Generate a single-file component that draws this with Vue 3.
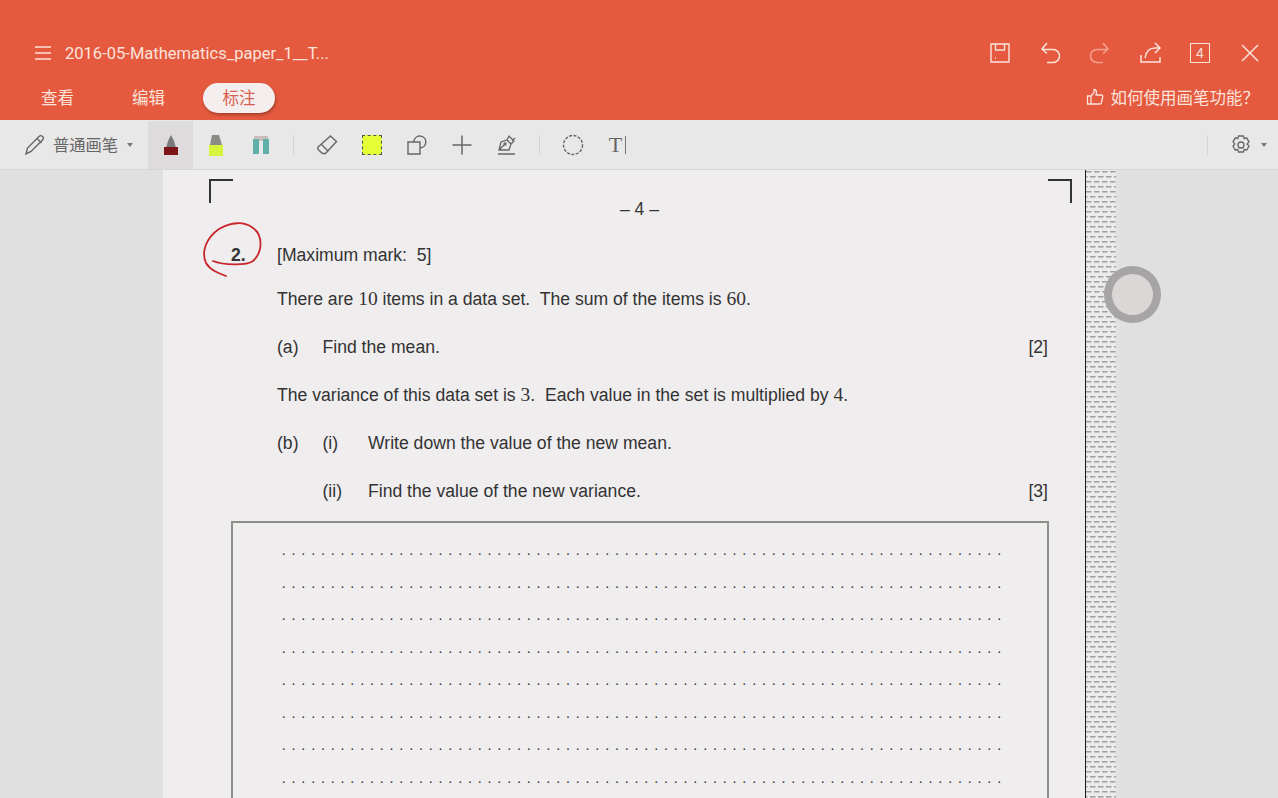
<script setup>
const dotRows = Array.from({ length: 8 }, (_, i) => i)
const dots = '.'.repeat(74)
</script>

<template>
  <div class="app">
    <header class="header">
      <div class="title-row">
        <svg class="menu-icon" width="18" height="16" viewBox="0 0 18 16" fill="none" stroke="#fbe3dc" stroke-width="1.5">
          <path d="M1 2h16M1 8h16M1 14h16" />
        </svg>
        <span class="doc-title">2016-05-Mathematics_paper_1__T...</span>
        <div class="actions">
          <button class="action">
            <svg width="22" height="22" viewBox="0 0 22 22" fill="none" stroke="#fbe3dc" stroke-width="1.4">
              <path d="M2 2h18v18H2zM6.500 2v6h9V2M6 16h1" />
            </svg>
          </button>
          <button class="action">
            <svg width="24" height="24" viewBox="0 0 24 24" fill="none" stroke="#fbe3dc" stroke-width="1.5">
              <path d="M9 2L4 8l5 4.500M4 8.500H15a6.500 6.500 0 0 1 0 13H9" />
            </svg>
          </button>
          <button class="action">
            <svg width="24" height="24" viewBox="0 0 24 24" fill="none" stroke="#f4a18f" stroke-width="1.5">
              <path d="M15 2l5 6-5 4.500M20 8.500H9a6.500 6.500 0 0 0 0 13h6" />
            </svg>
          </button>
          <button class="action">
            <svg width="24" height="24" viewBox="0 0 24 24" fill="none" stroke="#fbe3dc" stroke-width="1.5">
              <path d="M3 14v7h19v-5M7 17c1-7 5-10 10-10h5M17 2l5 5-5 5" />
            </svg>
          </button>
          <button class="action">
            <span class="page-count">4</span>
          </button>
          <button class="action">
            <svg width="22" height="22" viewBox="0 0 22 22" fill="none" stroke="#fbe3dc" stroke-width="1.5">
              <path d="M3 3l16 16M19 3L3 19" />
            </svg>
          </button>
        </div>
      </div>
      <div class="tab-row">
        <span class="tab">查看</span>
        <span class="tab">编辑</span>
        <span class="tab active">标注</span>
        <div class="hint">
          <svg width="18" height="18" viewBox="0 0 18 18" fill="none" stroke="#fbe3dc" stroke-width="1.3">
            <path d="M1.500 8h3.500v8H1.500zM5 8l3-3.500V1.500c2 0 2.500 1.500 2.500 3L10 7h5.500c1 0 1.500 1 1.200 2l-1.400 6c-.2.700-.7 1-1.300 1H5" />
          </svg>
          <span>如何使用画笔功能？</span>
        </div>
      </div>
    </header>

    <div class="toolbar">
      <div class="pen-select">
        <svg width="22" height="22" viewBox="0 0 22 22" fill="none" stroke="#666" stroke-width="1.4">
          <path d="M2 20l1.500-6L15 2.500c1-1 2.500-1 3.500 0s1 2.500 0 3.500L7 17.500zM13 4.500l4.500 4.500" />
        </svg>
        <span class="pen-label">普通画笔</span>
        <i class="caret"></i>
      </div>
      <div class="tool selected">
        <svg width="16" height="21" viewBox="0 0 16 21">
          <path d="M8 0l3 6 2 7H3l2-7z" fill="#7a7a7a" />
          <rect x="1" y="12" width="14" height="8" fill="#7d1518" />
        </svg>
      </div>
      <div class="tool">
        <svg width="16" height="21" viewBox="0 0 16 21">
          <path d="M4 0h7l3 10H2z" fill="#8b8b85" />
          <rect x="1" y="10" width="14" height="11" fill="#d6f53c" />
        </svg>
      </div>
      <div class="tool">
        <svg width="18" height="20" viewBox="0 0 18 20">
          <rect x="2" y="1" width="14" height="5" fill="#c9bdbd" />
          <rect x="1" y="4" width="6" height="15" fill="#5fb0a8" />
          <rect x="11" y="4" width="6" height="15" fill="#5fb0a8" />
        </svg>
      </div>
      <span class="sep"></span>
      <div class="tool">
        <svg width="22" height="22" viewBox="0 0 22 22" fill="none" stroke="#666" stroke-width="1.4">
          <path d="M14.500 2l6 5.500L9.500 19.500H6.500l-4.500-4v-2.500zM5 10l6.500 6.500" />
        </svg>
      </div>
      <div class="tool">
        <span class="swatch"></span>
      </div>
      <div class="tool">
        <svg width="22" height="22" viewBox="0 0 22 22" fill="none" stroke="#666" stroke-width="1.4">
          <path d="M2 8h12v12H2zM8 8V6.500a6 6 0 1 1 6 7.500" />
        </svg>
      </div>
      <div class="tool">
        <svg width="22" height="22" viewBox="0 0 22 22" fill="none" stroke="#666" stroke-width="1.5">
          <path d="M1.500 11h19M11 1.500v19" />
        </svg>
      </div>
      <div class="tool">
        <svg width="22" height="22" viewBox="0 0 22 22" fill="none" stroke="#666" stroke-width="1.3">
          <path d="M3 16l2-8 6-2 4 4-2 6zM3 16l5-5M11 6l2-4 5 5-3 3M19 4l-3 3M2 20h17" />
          <circle cx="9" cy="10" r="1" />
        </svg>
      </div>
      <span class="sep"></span>
      <div class="tool">
        <svg width="22" height="22" viewBox="0 0 22 22" fill="none" stroke="#666" stroke-width="1.4" stroke-dasharray="3 1.500">
          <circle cx="11" cy="11" r="9.500" />
        </svg>
      </div>
      <div class="tool text-tool">
        <span class="t-glyph">T</span><span class="t-cursor"></span>
      </div>
      <div class="toolbar-right">
        <span class="sep"></span>
        <svg class="gear" width="22" height="22" viewBox="0 0 22 22" fill="none" stroke="#666" stroke-width="1.3">
          <path d="M8.500 2h5l.7 2.600 2.400-.8 2.400 4-1.900 2.200 1.900 2-2.400 4.200-2.400-.8-.7 2.600h-5l-.7-2.600-2.400.8-2.400-4.200 1.900-2-1.900-2.200 2.400-4 2.400.8z" />
          <circle cx="11" cy="11" r="3" />
        </svg>
        <i class="caret"></i>
      </div>
    </div>

    <main class="viewer">
      <section class="page">
        <i class="crop crop-left"></i>
        <i class="crop crop-right"></i>
        <div class="page-number">– 4 –</div>
        <div class="line first">
          <b class="q-num">2.</b>
          <span>[Maximum mark:&nbsp; 5]</span>
        </div>
        <div class="line">
          <span>There are <em>10</em> items in a data set.&nbsp; The sum of the items is <em>60</em>.</span>
        </div>
        <div class="line">
          <span class="label">(a)</span>
          <span class="grow">Find the mean.</span>
          <span>[2]</span>
        </div>
        <div class="line">
          <span>The variance of this data set is <em>3</em>.&nbsp; Each value in the set is multiplied by <em>4</em>.</span>
        </div>
        <div class="line">
          <span class="label">(b)</span>
          <span class="label">(i)</span>
          <span class="grow">Write down the value of the new mean.</span>
        </div>
        <div class="line sub">
          <span class="label">(ii)</span>
          <span class="grow">Find the value of the new variance.</span>
          <span>[3]</span>
        </div>
        <div class="answer-box">
          <div v-for="row in dotRows" :key="row" class="dots">{{ dots }}</div>
        </div>
        <svg class="scribble" width="70" height="65" viewBox="0 0 70 65" fill="none" stroke="#c8252c" stroke-width="1.8" stroke-linecap="round">
          <path d="M12 41C22 45 45 46 52 41C62 32 62 15 52 8C43 1 30 2 18 9C5 18 0 32 5 43C9 50 17 53 25 56" />
        </svg>
      </section>
      <div class="hatch">
        <svg width="30" height="628">
          <defs>
            <pattern id="dashes" width="8" height="10" patternUnits="userSpaceOnUse">
              <rect x="0" y="1" width="5.500" height="1.500" fill="#a0a0a0" />
              <rect x="4" y="6" width="5.500" height="1.500" fill="#a0a0a0" />
              <rect x="-4" y="6" width="5.500" height="1.500" fill="#a0a0a0" />
            </pattern>
          </defs>
          <rect width="30" height="628" fill="url(#dashes)" />
        </svg>
      </div>
      <div class="side"></div>
      <div class="touch-ring"></div>
    </main>
  </div>
</template>

<style>
html,
body {
  margin: 0;
  overflow: hidden;
}
</style>

<style scoped>
.app {
  width: 1278px;
  height: 798px;
  display: flex;
  flex-direction: column;
  overflow: hidden;
  font-family: 'Liberation Sans', 'Noto Sans CJK SC', sans-serif;
  background: #e1e0e1;
}

.header {
  height: 120px;
  background: #e55a3f;
  color: #fbe3dc;
  flex: none;
}

.title-row {
  height: 81px;
  padding: 25px 0 0 34px;
  display: flex;
  align-items: center;
  box-sizing: border-box;
}

.menu-icon {
  flex: none;
}

.doc-title {
  margin-left: 13px;
  font-family: Roboto, 'Liberation Sans', sans-serif;
  font-size: 16.550px;
  white-space: nowrap;
}

.actions {
  margin-left: auto;
  margin-right: 3px;
  display: flex;
}

.action {
  width: 50px;
  height: 40px;
  padding: 0;
  border: 0;
  background: none;
  display: flex;
  align-items: center;
  justify-content: center;
}

.page-count {
  width: 18px;
  height: 18px;
  border: 1.500px solid #fbe3dc;
  font-size: 14px;
  line-height: 18px;
  text-align: center;
  color: #fbe3dc;
  font-family: 'Liberation Sans', sans-serif;
}

.tab-row {
  display: flex;
  align-items: center;
  height: 34px;
  padding-left: 41px;
}

.tab {
  font-size: 16.500px;
  margin-right: 58px;
  line-height: 32px;
  white-space: nowrap;
}

.tab.active {
  margin-left: -20px;
  width: 72px;
  height: 30px;
  line-height: 31px;
  border-radius: 15px;
  background: #f4eeee;
  color: #d9604f;
  text-align: center;
  box-shadow: 1px 2px 3px rgba(110, 40, 25, 0.5);
}

.hint {
  margin-left: auto;
  margin-right: 19px;
  margin-bottom: 2px;
  display: flex;
  align-items: center;
  gap: 7px;
  font-size: 16.500px;
  white-space: nowrap;
}

.toolbar {
  height: 50px;
  box-sizing: border-box;
  flex: none;
  display: flex;
  align-items: stretch;
  padding-top: 1px;
  background: #e8e8e8;
  border-bottom: 1px solid #d6d6d6;
}

.pen-select {
  width: 148px;
  box-sizing: border-box;
  padding: 0 0 0 24px;
  display: flex;
  align-items: center;
  color: #666;
  flex: none;
}

.pen-label {
  margin: 0 9px 0 7px;
  font-size: 16.300px;
  white-space: nowrap;
  line-height: 1;
}

.caret {
  width: 0;
  height: 0;
  border-left: 3.500px solid transparent;
  border-right: 3.500px solid transparent;
  border-top: 4px solid #777;
}

.tool {
  width: 45px;
  flex: none;
  display: flex;
  align-items: center;
  justify-content: center;
}

.tool.selected {
  background: #dddbdb;
}

.sep {
  width: 1px;
  height: 20px;
  background: #d4d4d4;
  align-self: center;
  margin: 0 10px;
  flex: none;
}

.swatch {
  width: 18px;
  height: 18px;
  background: #e4ff38;
  border: 1px dashed #555;
}

.text-tool {
  gap: 3px;
}

.t-glyph {
  font-family: 'Liberation Serif', serif;
  font-size: 22px;
  color: #666;
}

.t-cursor {
  width: 1px;
  height: 18px;
  background: #777;
}

.toolbar-right {
  margin-left: auto;
  margin-right: 11px;
  display: flex;
  align-items: center;
}

.toolbar-right .sep {
  margin: 0 22px 0 0;
}

.gear {
  margin-right: 9px;
}

.viewer {
  flex: 1;
  min-height: 0;
  padding-left: 163px;
  position: relative;
  display: flex;
  overflow: hidden;
}

.page {
  width: 923px;
  flex: none;
  position: relative;
  box-sizing: border-box;
  padding: 24px 37px 0 68px;
  background: #efedee;
  border-right: 1px solid #1c1c1c;
  color: #333;
  font-size: 17.600px;
}

.crop {
  position: absolute;
  top: 9px;
  width: 22px;
  height: 22px;
  border-top: 2px solid #333;
}

.crop-left {
  left: 46px;
  border-left: 2px solid #333;
}

.crop-right {
  right: 13px;
  border-right: 2px solid #333;
}

.page-number {
  height: 30px;
  line-height: 30px;
  text-align: center;
}

.line {
  display: flex;
  align-items: center;
  padding-left: 46px;
  height: 48px;
  white-space: nowrap;
}

.line.first {
  height: 40px;
  margin-top: 11px;
  position: relative;
}

.line em {
  font-family: 'Liberation Serif', serif;
  font-style: normal;
  font-size: 19.500px;
}

.q-num {
  position: absolute;
  left: 0;
  font-weight: 700;
}

.label {
  width: 45.500px;
  flex: none;
}

.grow {
  flex: 1;
}

.line.sub {
  padding-left: 91.500px;
}

.answer-box {
  margin: 6px -1px 0 0;
  height: 320px;
  box-sizing: border-box;
  border: 2px solid #8d8d88;
  padding: 12px 0 0 49px;
}

.dots {
  height: 32.500px;
  line-height: 32.500px;
  font-family: 'Liberation Serif', serif;
  font-size: 14px;
  letter-spacing: 6.300px;
  color: #333;
  white-space: nowrap;
}

.scribble {
  position: absolute;
  left: 38px;
  top: 50px;
}

.hatch {
  width: 30px;
  flex: none;
  background-color: #ebebeb;
}

.hatch svg {
  display: block;
}

.side {
  flex: 1;
}

.touch-ring {
  position: absolute;
  left: 1104px;
  top: 96px;
  width: 41px;
  height: 41px;
  border: 8px solid rgba(160, 158, 158, 0.9);
  border-radius: 50%;
  background: rgba(218, 214, 214, 0.95);
}
</style>
